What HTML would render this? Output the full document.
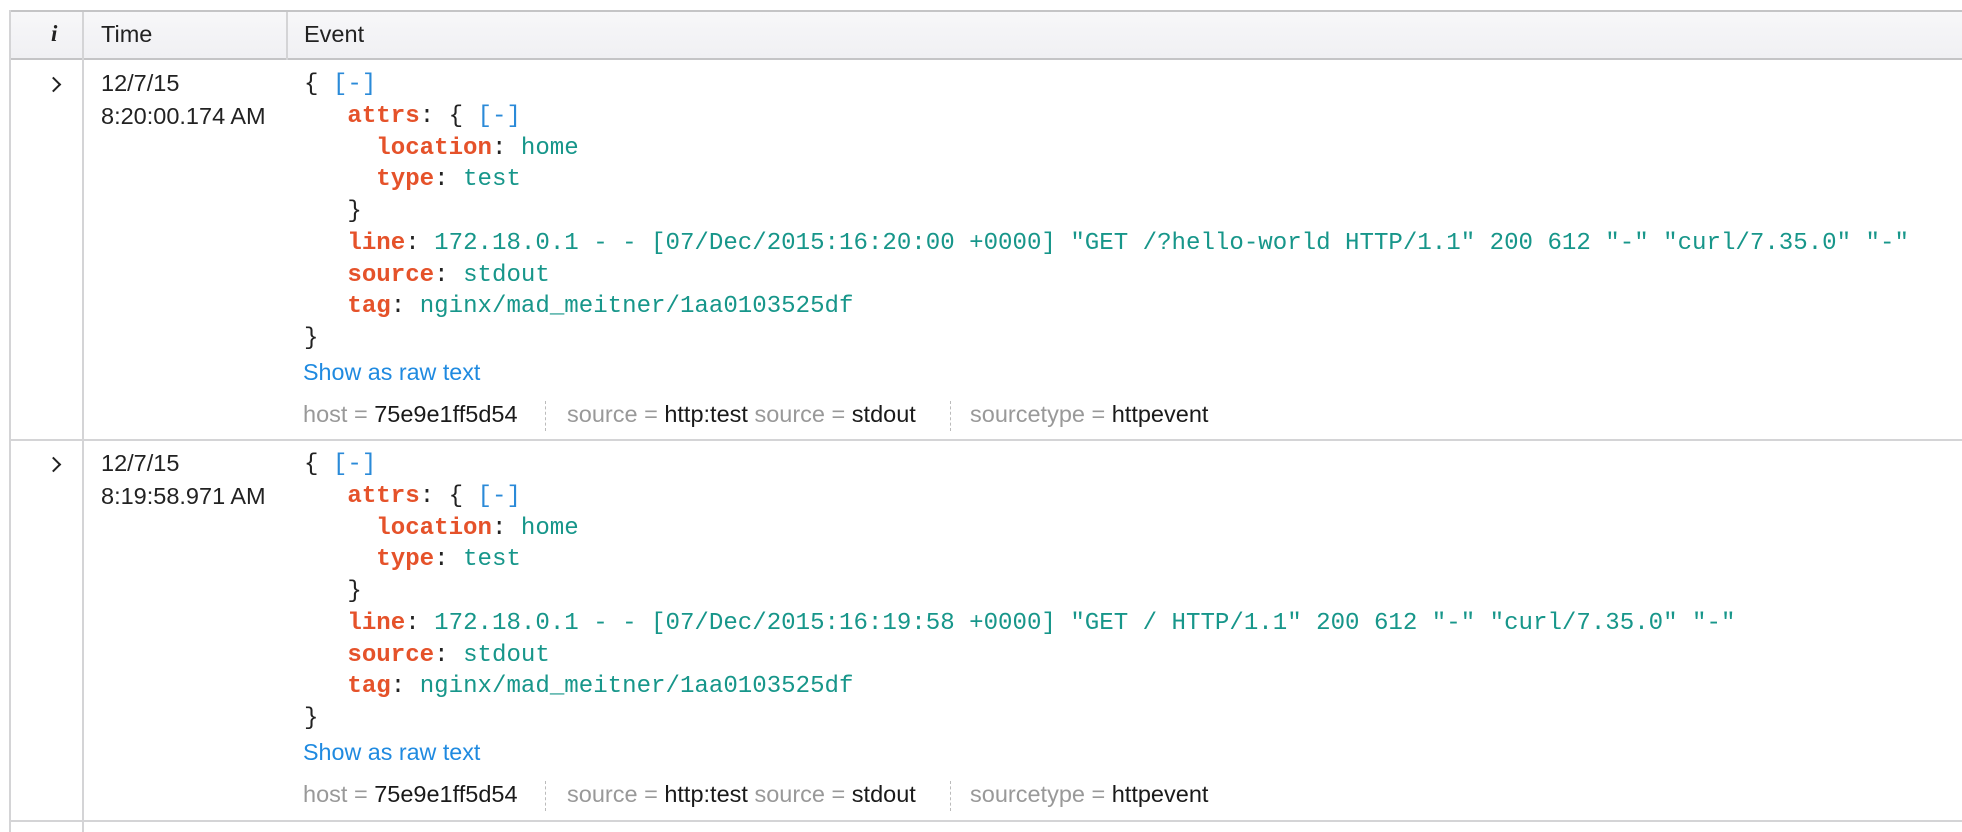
<!DOCTYPE html>
<html><head><meta charset="utf-8"><style>
*{margin:0;padding:0;box-sizing:border-box}
body{width:1962px;height:832px;background:#fff;position:relative;overflow:hidden;font-family:"Liberation Sans",Arial,sans-serif;color:#222}
.a{position:absolute;white-space:pre}
.hdr{position:absolute;left:10px;top:10px;width:1952px;height:50px;background:linear-gradient(#f7f7f9,#f0f0f3);border-top:2px solid #c4c4c6;border-bottom:2px solid #c4c4c6}
.vl{position:absolute;width:2px;background:#d4d4d6}
.hl{position:absolute;left:10px;width:1952px;height:2px;background:#d4d4d6}
.h{font-size:23.5px;color:#222;top:21px}
.t{font-size:23.5px;line-height:33px;color:#222}
.code{font-family:"Liberation Mono","DejaVu Sans Mono",monospace;font-size:24.1px;line-height:31.75px;color:#222;letter-spacing:0}
.k{color:#e5522a;font-weight:bold}
.v{color:#17968a}
.b{color:#2a8ad8}
.link{font-size:23.3px;color:#1f8ae0}
.f{font-size:23.5px;color:#999}
.f b{font-weight:normal;color:#1a1a1a}
.sep{position:absolute;width:0;border-left:1px dashed #bbb;height:30px}
.chev{position:absolute;width:11px;height:11px;border-right:2.4px solid #222;border-bottom:2.4px solid #222;transform:rotate(-45deg)}
</style></head><body>
<div class="hdr"></div>
<div class="vl" style="left:9px;top:10px;height:822px"></div>
<div class="vl" style="left:82px;top:12px;height:820px"></div>
<div class="vl" style="left:286px;top:12px;height:48px"></div>
<div class="a h" style="left:51px;font-family:'Liberation Serif',serif;font-style:italic;font-weight:bold;font-size:23px;top:21px">i</div>
<div class="a h" style="left:101px">Time</div>
<div class="a h" style="left:304px">Event</div>

<div class="hl" style="top:439px"></div>
<div class="hl" style="top:820px"></div>

<div class="chev" style="left:48px;top:79px"></div>
<div class="a t" style="left:101px;top:67px">12/7/15
8:20:00.174 AM</div>
<div class="a code" style="left:304px;top:69px">{ <span class="b">[-]</span>
   <span class="k">attrs</span>: { <span class="b">[-]</span>
     <span class="k">location</span>: <span class="v">home</span>
     <span class="k">type</span>: <span class="v">test</span>
   }
   <span class="k">line</span>: <span class="v">172.18.0.1 - - [07/Dec/2015:16:20:00 +0000] "GET /?hello-world HTTP/1.1" 200 612 "-" "curl/7.35.0" "-"</span>
   <span class="k">source</span>: <span class="v">stdout</span>
   <span class="k">tag</span>: <span class="v">nginx/mad_meitner/1aa0103525df</span>
}</div>
<div class="a link" style="left:303px;top:359px">Show as raw text</div>
<div class="a f" style="left:303px;top:401px">host = <b>75e9e1ff5d54</b></div>
<div class="sep" style="left:545px;top:401px"></div>
<div class="a f" style="left:567px;top:401px">source = <b>http:test</b> source = <b>stdout</b></div>
<div class="sep" style="left:950px;top:401px"></div>
<div class="a f" style="left:970px;top:401px">sourcetype = <b>httpevent</b></div>

<div class="chev" style="left:48px;top:459px"></div>
<div class="a t" style="left:101px;top:447px">12/7/15
8:19:58.971 AM</div>
<div class="a code" style="left:304px;top:449px">{ <span class="b">[-]</span>
   <span class="k">attrs</span>: { <span class="b">[-]</span>
     <span class="k">location</span>: <span class="v">home</span>
     <span class="k">type</span>: <span class="v">test</span>
   }
   <span class="k">line</span>: <span class="v">172.18.0.1 - - [07/Dec/2015:16:19:58 +0000] "GET / HTTP/1.1" 200 612 "-" "curl/7.35.0" "-"</span>
   <span class="k">source</span>: <span class="v">stdout</span>
   <span class="k">tag</span>: <span class="v">nginx/mad_meitner/1aa0103525df</span>
}</div>
<div class="a link" style="left:303px;top:739px">Show as raw text</div>
<div class="a f" style="left:303px;top:781px">host = <b>75e9e1ff5d54</b></div>
<div class="sep" style="left:545px;top:781px"></div>
<div class="a f" style="left:567px;top:781px">source = <b>http:test</b> source = <b>stdout</b></div>
<div class="sep" style="left:950px;top:781px"></div>
<div class="a f" style="left:970px;top:781px">sourcetype = <b>httpevent</b></div>
</body></html>
